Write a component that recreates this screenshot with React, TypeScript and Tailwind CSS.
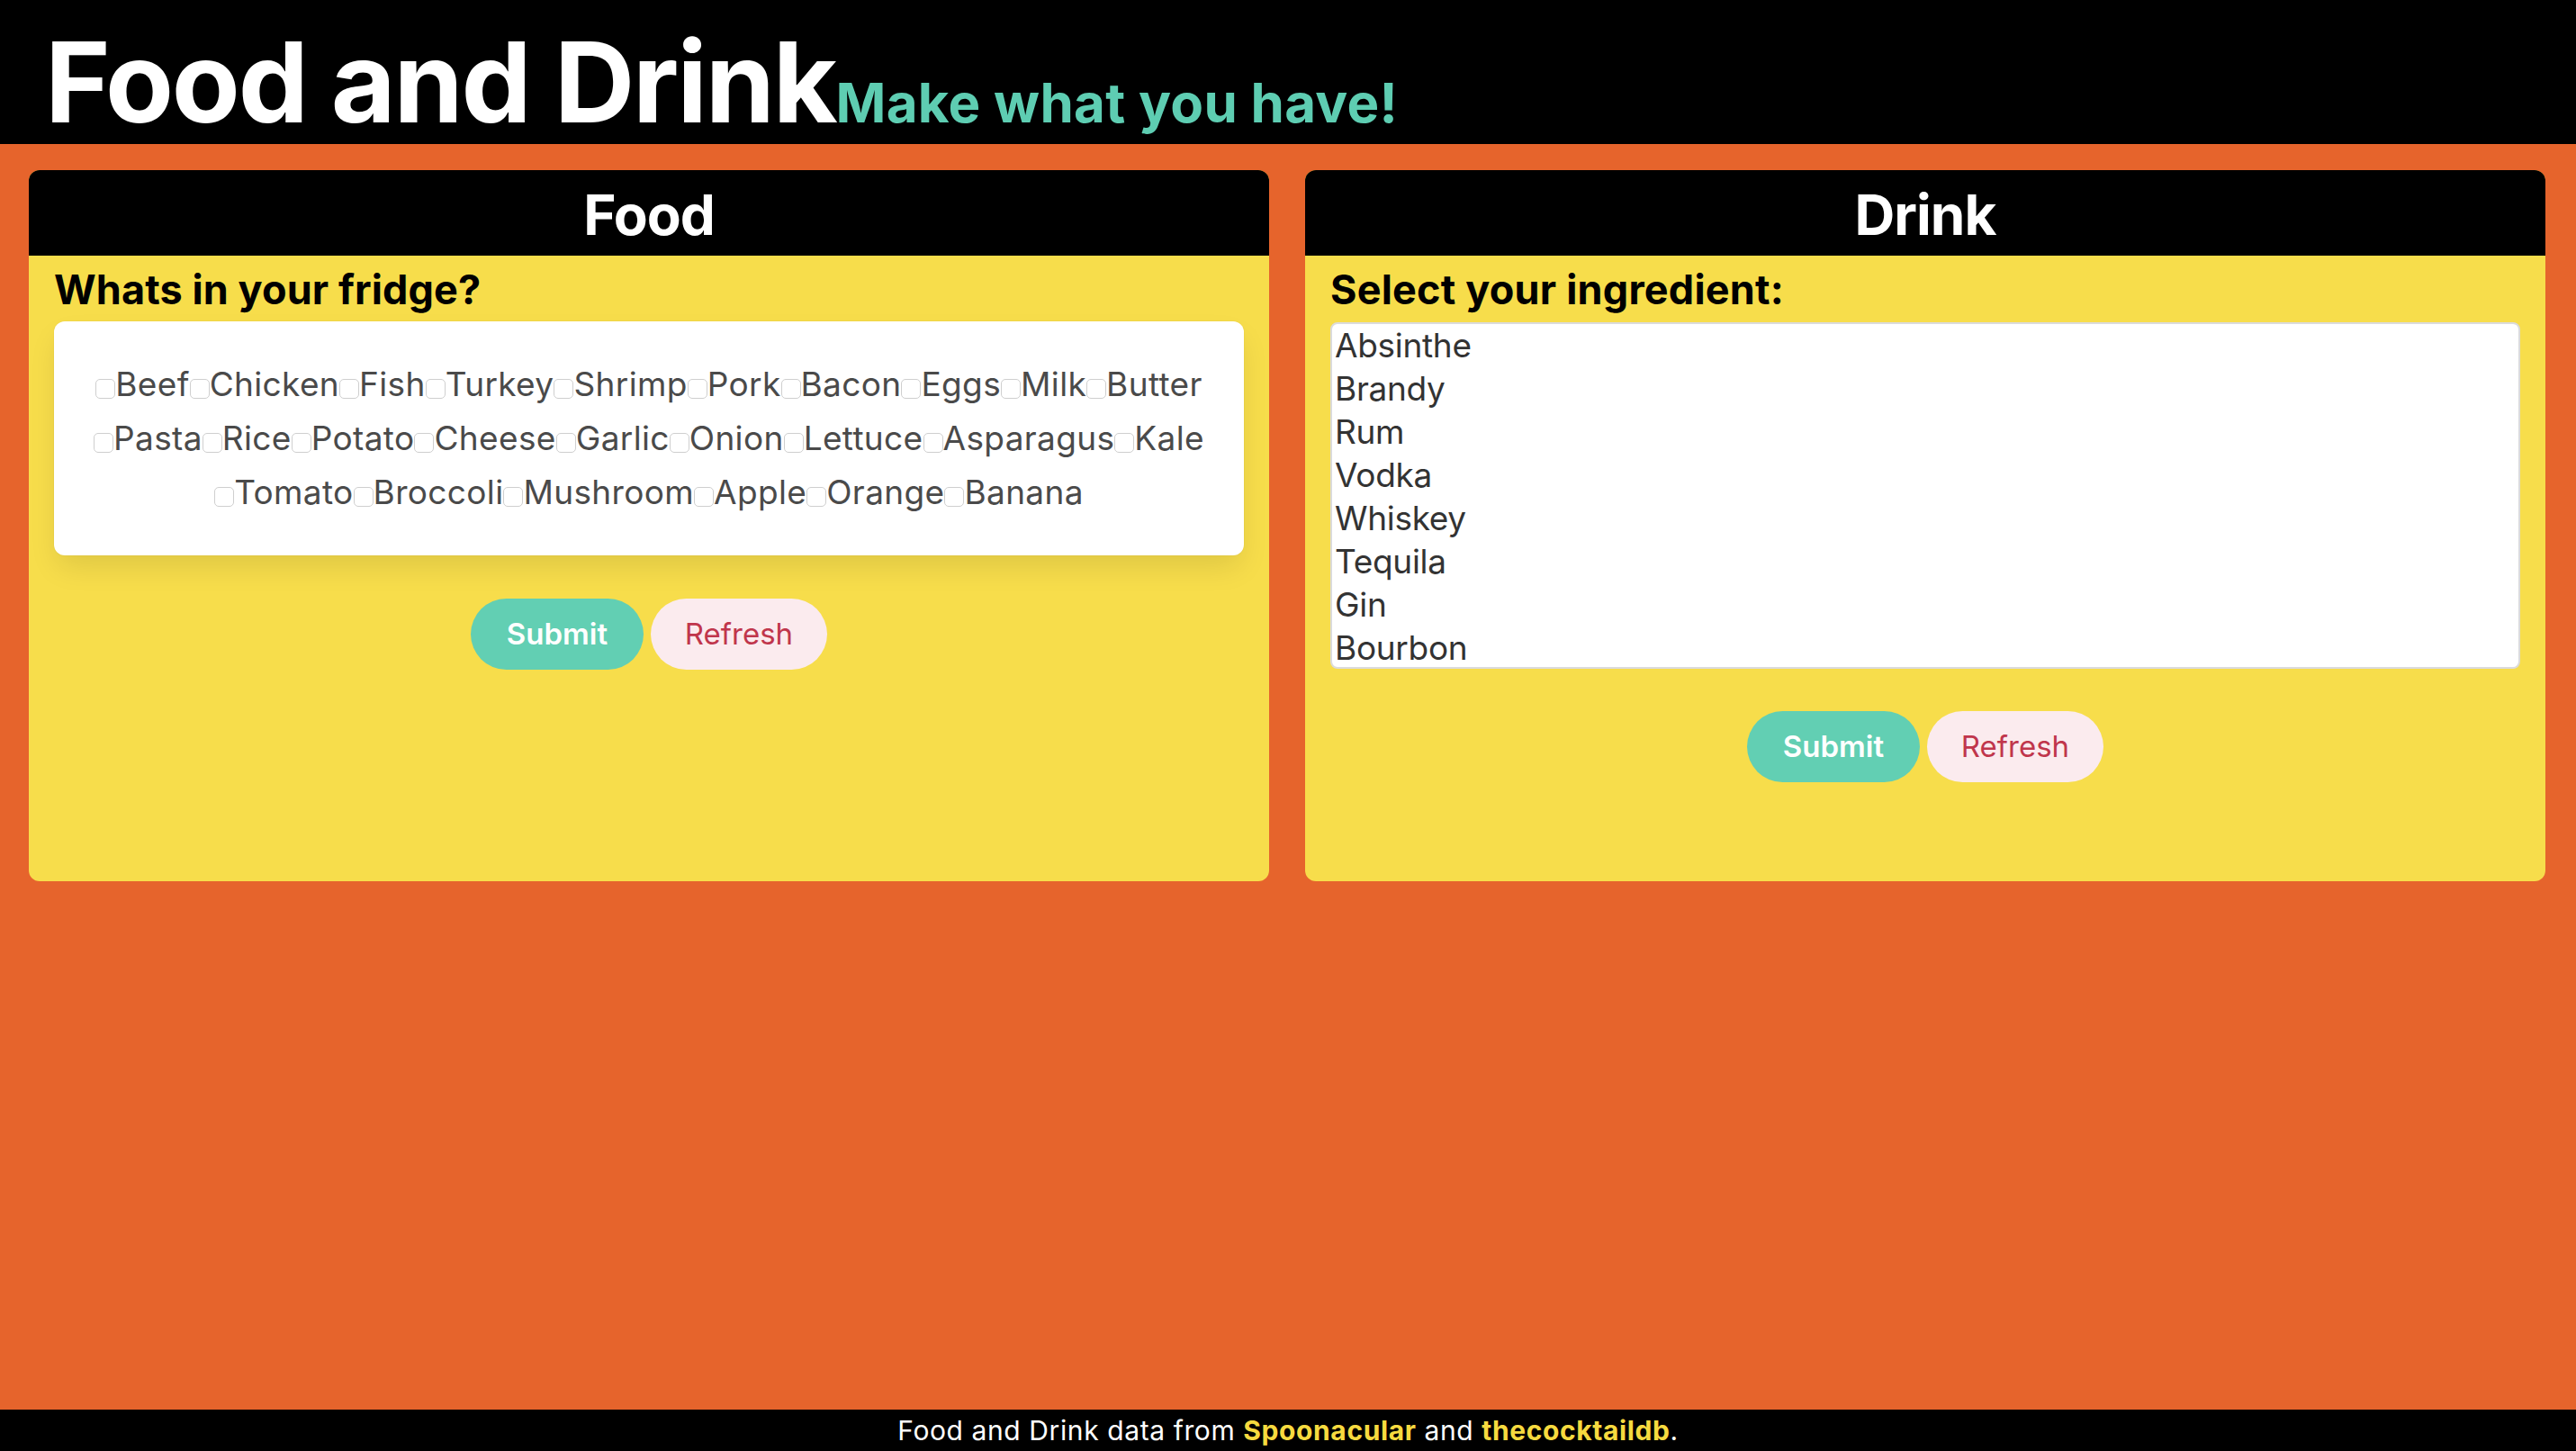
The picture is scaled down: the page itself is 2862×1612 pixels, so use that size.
import { useState } from 'react'

const foods = [
  'Beef', 'Chicken', 'Fish', 'Turkey', 'Shrimp', 'Pork', 'Bacon', 'Eggs', 'Milk', 'Butter',
  'Pasta', 'Rice', 'Potato', 'Cheese', 'Garlic', 'Onion', 'Lettuce', 'Asparagus', 'Kale',
  'Tomato', 'Broccoli', 'Mushroom', 'Apple', 'Orange', 'Banana',
]

const drinks = ['Absinthe', 'Brandy', 'Rum', 'Vodka', 'Whiskey', 'Tequila', 'Gin', 'Bourbon']

function Buttons({ onRefresh }: { onRefresh: () => void }) {
  return (
    <div className="flex justify-center gap-[8px]">
      <button className="h-[79px] w-[192px] rounded-full bg-[#62cfb3] text-[33px] font-semibold text-white">
        Submit
      </button>
      <button
        onClick={onRefresh}
        className="h-[79px] w-[196px] rounded-full bg-[#fbebee] text-[33px] text-[#c0364c]"
      >
        Refresh
      </button>
    </div>
  )
}

function Card({ title, children }: { title: string; children: React.ReactNode }) {
  return (
    <div className="flex flex-col overflow-hidden rounded-[12px] bg-[#f7dd4b]">
      <div className="flex h-[95px] items-center justify-center bg-black pt-[4px]">
        <h2 className="text-[62px] font-bold tracking-[-1px] text-white">{title}</h2>
      </div>
      <div className="flex-1 px-[28px] pt-[10px] pb-[110px]">{children}</div>
    </div>
  )
}

export default function App() {
  const [checked, setChecked] = useState<string[]>([])
  const [picked, setPicked] = useState<string[]>([])

  const toggle = (f: string) =>
    setChecked(c => (c.includes(f) ? c.filter(x => x !== f) : [...c, f]))

  return (
    <div className="flex min-h-screen flex-col bg-[#e6642c] font-['Inter',sans-serif]">
      {/* Header */}
      <header className="flex h-[160px] items-baseline bg-black pl-[50px] pt-[29px]">
        <h1 className="text-[124px] font-bold leading-none tracking-[-2.2px] text-white">Food and Drink</h1>
        <span className="text-[60px] font-bold leading-none tracking-[0.3px] text-[#5ecdb2]">Make what you have!</span>
      </header>

      {/* Cards */}
      <main className="flex-1 pl-[32px] pr-[34px] pt-[29px]">
        <div className="grid grid-cols-2 items-stretch gap-[40px]">
          <Card title="Food">
            <h3 className="text-[45px] font-bold leading-[56px] tracking-[0.1px] text-black">Whats in your fridge?</h3>
            <div className="mt-[7px] rounded-[12px] bg-white p-[40px] text-center text-[37px] leading-[60px] tracking-[0.35px] text-[#4a4a4a] shadow-[0_16px_32px_-4px_rgba(10,10,10,0.1),0_0_0_1px_rgba(10,10,10,0.02)]">
              <div className="flex flex-wrap justify-center">
                {foods.map(f => (
                  <label key={f} className="cursor-pointer whitespace-nowrap">
                    <input
                      type="checkbox"
                      checked={checked.includes(f)}
                      onChange={() => toggle(f)}
                      className="inline-block h-[22px] w-[22px] appearance-none rounded-[5px] border border-[#cfcfcf] bg-white align-[-3px] checked:bg-[#3b82f6]"
                    />
                    {f}
                  </label>
                ))}
              </div>
            </div>
            <div className="mt-[48px]">
              <Buttons onRefresh={() => setChecked([])} />
            </div>
          </Card>

          <Card title="Drink">
            <h3 className="text-[45px] font-bold leading-[56px] tracking-[0.2px] text-black">Select your ingredient:</h3>
            <div className="mt-[8px] h-[385px] overflow-hidden rounded-[8px] border-2 border-[#dbdbdb] bg-white text-[37px] leading-[48px] tracking-[-0.3px] text-[#333333]">
              {drinks.map(d => (
                <div
                  key={d}
                  onClick={() => setPicked(p => (p.includes(d) ? p.filter(x => x !== d) : [...p, d]))}
                  className={`cursor-pointer pl-[3px] ${picked.includes(d) ? 'bg-[#cfe3fb]' : ''}`}
                >
                  {d}
                </div>
              ))}
            </div>
            <div className="mt-[47px]">
              <Buttons onRefresh={() => setPicked([])} />
            </div>
          </Card>
        </div>
      </main>

      {/* Footer */}
      <footer className="flex h-[46px] items-center justify-center bg-black text-[30px] tracking-[0.6px] text-white">
        <p>
          Food and Drink data from <a className="font-bold text-[#f6da3f]">Spoonacular</a> and{' '}
          <a className="font-bold text-[#f6da3f]">thecocktaildb</a>.
        </p>
      </footer>
    </div>
  )
}
